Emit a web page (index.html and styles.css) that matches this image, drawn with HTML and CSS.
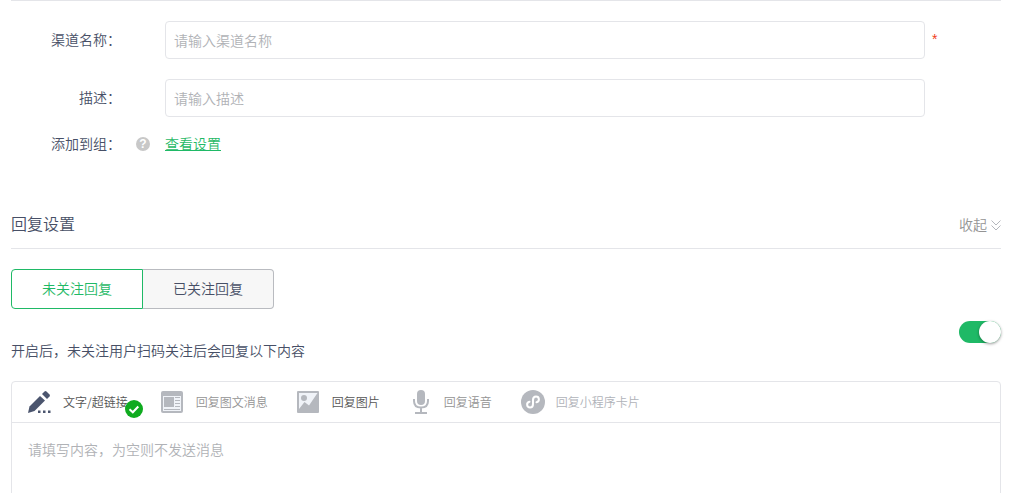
FILE: index.html
```html
<!DOCTYPE html>
<html lang="zh-CN">
<head>
    <meta charset="UTF-8">
    <meta name="viewport" content="width=device-width, initial-scale=1.0">
    <title>渠道设置</title>
    <link rel="stylesheet" href="styles.css">
</head>
<body>
    <main>
        <form class="channel-form">
            <div class="form-row">
                <label class="form-label" for="channel-name">渠道名称：</label>
                <div class="form-field">
                    <input class="text-input" id="channel-name" type="text" placeholder="请输入渠道名称" required>
                    <span class="required">*</span>
                </div>
            </div>
            <div class="form-row">
                <label class="form-label" for="channel-desc">描述：</label>
                <div class="form-field">
                    <input class="text-input" id="channel-desc" type="text" placeholder="请输入描述">
                </div>
            </div>
            <div class="form-row group-row">
                <span class="form-label">添加到组：</span>
                <button class="help" type="button" aria-label="帮助">?</button>
                <div class="form-field">
                    <a class="group-link" href="#">查看设置</a>
                </div>
            </div>
        </form>

        <section class="reply">
            <header class="section-header">
                <h2>回复设置</h2>
                <button class="collapse" type="button">
                    收起
                    <svg width="10" height="11" viewBox="0 0 10 11" fill="none" stroke="#b4b7bd" aria-hidden="true">
                        <path d="M0.5 0.5L5 5L9.5 0.5M0.5 5.5L5 10L9.5 5.5"/>
                    </svg>
                </button>
            </header>

            <div class="tabs">
                <button class="tab active" type="button">未关注回复</button>
                <button class="tab" type="button">已关注回复</button>
            </div>

            <div class="switch-row">
                <label for="reply-switch">开启后，未关注用户扫码关注后会回复以下内容</label>
                <input class="switch" id="reply-switch" type="checkbox" checked>
            </div>

            <div class="editor">
                <div class="toolbar">
                    <button class="tool selected" type="button">
                        <svg width="24" height="24" viewBox="0 0 24 24" fill="#4b556e" aria-hidden="true">
                            <path d="M0 23L1.5 16.500L12 6L17 10.500L6.500 21Z"/>
                            <path d="M14 4L16.5 1.5Q17.5 0.6 18.5 1.5L21.5 4.5Q22.4 5.5 21.5 6.5L19 9Z"/>
                            <path d="M10 20.500h2.500v2.500h-2.500zM15 20.500h2.500v2.500h-2.500zM20 20.500h2.500v2.500h-2.500z"/>
                        </svg>
                        文字/超链接
                        <svg class="check" width="18" height="18" viewBox="0 0 18 18" aria-hidden="true">
                            <circle cx="9" cy="9" r="9" fill="#0fab1f"/>
                            <path d="M4.5 9.3L7.8 12.3L13.3 6.5" fill="none" stroke="#fff" stroke-width="2"/>
                        </svg>
                    </button>
                    <button class="tool" type="button">
                        <svg width="24" height="24" viewBox="0 0 24 24" aria-hidden="true">
                            <rect x="0" y="1" width="22" height="22" rx="2" fill="#b5b8be"/>
                            <path d="M2 6h18v15H2z" fill="#f0f3f8"/>
                            <path d="M3 7h10v10H3zM14 7h5v1h-5zM14 10h5v1h-5zM14 13h5v1h-5zM14 16h5v1h-5zM3 19h16v1H3z" fill="#b5b8be"/>
                        </svg>
                        回复图文消息
                    </button>
                    <button class="tool dark" type="button">
                        <svg width="24" height="24" viewBox="0 0 24 24" aria-hidden="true">
                            <rect x="0" y="1" width="22" height="22" rx="1" fill="#b5b8be"/>
                            <path d="M2 3h18.500L12 15.500L7.500 12L2 19z" fill="#f0f3f8"/>
                            <circle cx="7" cy="8" r="3" fill="#b5b8be"/>
                        </svg>
                        回复图片
                    </button>
                    <button class="tool" type="button">
                        <svg width="24" height="24" viewBox="0 0 24 24" fill="none" stroke="#b5b8be" stroke-width="2" aria-hidden="true">
                            <rect x="8" y="0" width="8" height="15" rx="4" fill="#b5b8be" stroke="none"/>
                            <path d="M5 9v2Q5 17.500 12 17.500Q19 17.500 19 11V9M12 17.500V23M6 23h12"/>
                        </svg>
                        回复语音
                    </button>
                    <button class="tool light" type="button">
                        <svg width="24" height="24" viewBox="0 0 24 24" fill="none" aria-hidden="true">
                            <circle cx="12" cy="12" r="12" fill="#b5b8be"/>
                            <path d="M8.500 11.800C5 12.500 5.500 17.500 9 17.500Q12 17.500 12 14V10Q12 6.500 15 6.500C18.500 6.500 19 11.500 15.500 12.200" stroke="#fff" stroke-width="2" stroke-linecap="round"/>
                        </svg>
                        回复小程序卡片
                    </button>
                </div>
                <textarea class="content" aria-label="回复内容" placeholder="请填写内容，为空则不发送消息"></textarea>
            </div>
        </section>
    </main>
</body>
</html>
```

FILE: styles.css
```css
:root {
    --green: #1fb966;
    --text-color: #474f66;
    --border-color: #e4e5e9;
    --placeholder: #b0b2b6;
}

* {
    margin: 0;
    padding: 0;
    box-sizing: border-box;
}

body {
    background-color: #fff;
    color: var(--text-color);
    font-family: "Liberation Sans", "Noto Sans CJK SC", sans-serif;
    font-size: 14px;
    font-weight: 350;
    line-height: 20px;
    padding: 0 19px 0 11px;
}

button,
input,
textarea {
    font: inherit;
    color: inherit;
}

button {
    background: none;
    border: none;
    cursor: pointer;
}

::placeholder {
    color: var(--placeholder);
    opacity: 1;
}

/* form */
.channel-form {
    border-top: 1px solid var(--border-color);
    padding-top: 20px;
}

.form-row {
    display: grid;
    grid-template-columns: 110px 44px 1fr;
    align-items: center;
    margin-bottom: 20px;
}

.form-label {
    text-align: right;
}

.form-field {
    grid-column: 3;
    display: flex;
    gap: 7px;
    padding-right: 76px;
}

.text-input {
    flex: 1;
    height: 38px;
    padding: 2px 8px 0;
    border: 1px solid var(--border-color);
    border-radius: 4px;
    outline: none;
}

.required {
    width: 6px;
    margin: 8px -13px 0 0;
    color: #f04020;
}

.group-row {
    margin-top: -3px;
}

.help {
    justify-self: center;
    width: 14px;
    height: 14px;
    border-radius: 50%;
    background-color: #c8c8c8;
    color: #fff;
    font-size: 12px;
    font-weight: bold;
    line-height: 14px;
}

.group-link {
    color: var(--green);
}

/* reply settings */
.section-header {
    display: flex;
    justify-content: space-between;
    align-items: center;
    margin-top: 59px;
    padding-bottom: 11px;
    border-bottom: 1px solid var(--border-color);
}

.section-header h2 {
    font-size: 16px;
    font-weight: inherit;
    line-height: 24px;
}

.collapse {
    display: flex;
    align-items: center;
    gap: 4px;
    color: #949494;
}

.tabs {
    display: flex;
    margin-top: 20px;
}

.tab {
    height: 40px;
    padding: 0 30px;
    border: 1px solid #b9bbc0;
    border-left: none;
    border-radius: 0 4px 4px 0;
    background-color: #f7f7f7;
}

.tab.active {
    border: 1px solid var(--green);
    border-radius: 4px 0 0 4px;
    background-color: #fff;
    color: var(--green);
}

.switch-row {
    display: flex;
    justify-content: space-between;
    margin-top: 12px;
}

.switch-row label {
    padding: 20px 0;
}

.switch {
    appearance: none;
    display: flex;
    justify-content: flex-end;
    width: 42px;
    height: 22px;
    border-radius: 11px;
    background-color: var(--green);
}

.switch::before {
    content: "";
    width: 22px;
    height: 22px;
    border-radius: 50%;
    background-color: #fff;
    box-shadow: 0 1px 3px rgba(0, 0, 0, 0.4);
}

.editor {
    border: 1px solid var(--border-color);
    border-radius: 4px;
}

.toolbar {
    display: flex;
    align-items: center;
    gap: 29px;
    height: 41px;
    padding: 0 16px;
    border-bottom: 1px solid var(--border-color);
}

.tool {
    position: relative;
    display: flex;
    align-items: center;
    gap: 11px;
    color: #949494;
    font-family: "Noto Sans CJK SC", sans-serif;
    font-size: 12px;
    white-space: nowrap;
}

.tool.selected {
    margin-right: 4px;
    color: #555;
}

.tool.dark {
    color: #555;
}

.tool.light {
    color: #b0b3b9;
}

.check {
    position: absolute;
    right: -15px;
    bottom: -4px;
}

.content {
    display: block;
    width: 100%;
    height: 200px;
    padding: 17px 16px;
    border: none;
    outline: none;
    resize: none;
    background: none;
}
```
